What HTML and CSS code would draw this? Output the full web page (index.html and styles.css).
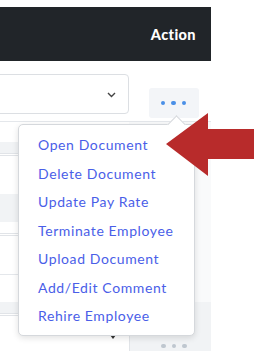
FILE: index.html
```html
<!DOCTYPE html>
<html lang="en">
<head>
  <meta charset="UTF-8" />
  <meta name="viewport" content="width=device-width, initial-scale=1.0"/>
  <title>Employees | Actions</title>
  <link rel="stylesheet" href="styles.css">
</head>
<body>

  <div class="table">
    <div class="thead">
      <span class="th">Action</span>
    </div>

    <div class="row-first">
      <div class="cell-main">
        <div class="select">
          <svg class="chevron" width="9" height="6" viewBox="0 0 9 6"><path d="M1 1l3.5 3.5L8 1" fill="none" stroke="#444" stroke-width="1.4"/></svg>
        </div>
      </div>
      <div class="cell-action">
        <button class="dots"><i></i><i></i><i></i></button>
      </div>
    </div>

    <div class="rows">
      <div class="col-main">
        <div class="gap" style="height:20px"></div>
        <div class="band" style="height:11px"></div>
        <div class="dline"></div>
        <div class="gap" style="height:38px"></div>
        <div class="band" style="height:28px"></div>
        <div class="gap" style="height:11px"></div>
        <div class="dline"></div>
        <div class="gap" style="height:38px"></div>
        <div class="line"></div>
        <div class="gap" style="height:27px"></div>
        <div class="band" style="height:11px"></div>
        <div class="dline"></div>
        <div class="last">
          <svg width="6" height="4" viewBox="0 0 6 4"><path d="M0 0h6L3 4z" fill="#333"/></svg>
        </div>
      </div>
      <div class="col-action">
        <div class="act-top"></div>
        <div class="act-bottom">
          <span class="dots dots-muted"><i></i><i></i><i></i></span>
        </div>
      </div>
    </div>

    <!-- dropdown shown over the table -->
    <div class="menu">
      <span class="caret"></span>
      <a href="#" class="menu-item">Open Document</a>
      <a href="#" class="menu-item">Delete Document</a>
      <a href="#" class="menu-item">Update Pay Rate</a>
      <a href="#" class="menu-item">Terminate Employee</a>
      <a href="#" class="menu-item">Upload Document</a>
      <a href="#" class="menu-item">Add/Edit Comment</a>
      <a href="#" class="menu-item">Rehire Employee</a>
    </div>

    <svg class="pointer" width="90" height="64" viewBox="0 0 90 64">
      <polygon points="0,31 42,0 42,16 88,16 88,46 42,46 42,63" fill="#b82b2b"/>
    </svg>
  </div>

</body>
</html>
```

FILE: styles.css
```css
html, body {
  margin: 0;
  padding: 0;
  height: 100%;
  background: #fff;
  font-family: Lato, "Open Sans", sans-serif;
  overflow: hidden;
}

.table {
  position: relative;
  width: 211px;
  margin-top: 7px;
}

.thead {
  height: 54px;
  background: #212529;
  display: flex;
  align-items: center;
  justify-content: flex-end;
  padding-right: 15px;
}

.th {
  color: #fff;
  font-weight: 900;
  font-size: 14.5px;
  letter-spacing: 0.4px;
}

.row-first {
  display: flex;
  height: 60px;
  border-bottom: 1px solid #e4e7eb;
}

.cell-main {
  width: 129px;
  padding-top: 13px;
}

.select {
  margin-left: -10px;
  width: 139px;
  height: 40px;
  border: 1px solid #dcdfe3;
  border-radius: 4px;
  display: flex;
  align-items: center;
  justify-content: flex-end;
  padding-right: 12px;
  box-sizing: border-box;
}

.chevron {
  margin-top: 1px;
}

.cell-action {
  flex: 1;
  display: flex;
  justify-content: center;
  align-items: flex-end;
  padding-bottom: 3px;
}

.dots {
  width: 50px;
  height: 30px;
  border: 0;
  padding: 0;
  background: #f3f5f8;
  border-radius: 3px;
  display: flex;
  justify-content: center;
  align-items: center;
  gap: 6px;
  margin-left: 7px;
}

.dots i {
  width: 4.5px;
  height: 4.5px;
  border-radius: 50%;
  background: #4a8fe7;
}

.dots-muted {
  background: transparent;
  height: auto;
}

.dots-muted i {
  background: #bfc7cf;
}

.rows {
  display: flex;
  height: 230px;
}

.col-main {
  width: 129px;
  display: flex;
  flex-direction: column;
}

.gap {
  background: #fff;
}

.band {
  background: #f1f3f5;
}

.line {
  height: 0;
  border-top: 1px solid #e4e7eb;
}

.dline {
  height: 1px;
  border-top: 1px solid #e1e4e8;
  border-bottom: 1px solid #e1e4e8;
}

.last {
  flex: 1;
  display: flex;
  justify-content: flex-end;
  padding-right: 13px;
  padding-top: 19px;
}

.col-action {
  flex: 1;
  display: flex;
  flex-direction: column;
}

.act-top {
  height: 180px;
  background: #f9fafb;
}

.act-bottom {
  flex: 1;
  background: #f1f3f5;
  border-left: 1px solid #e1e4e8;
  display: flex;
  justify-content: center;
  padding-top: 38px;
}

.menu {
  position: absolute;
  left: 18px;
  top: 117px;
  width: 177px;
  height: 212px;
  box-sizing: border-box;
  background: #fff;
  border: 1px solid #d5d8dc;
  border-radius: 5px;
  box-shadow: 0 2px 6px rgba(0, 0, 0, 0.12);
  padding: 6px 0;
  display: flex;
  flex-direction: column;
}

.caret {
  position: absolute;
  left: 151px;
  top: -7px;
  width: 12px;
  height: 12px;
  background: #fff;
  border-top: 1px solid #d5d8dc;
  border-left: 1px solid #d5d8dc;
  transform: rotate(45deg);
}

.menu-item {
  display: block;
  padding-left: 19px;
  line-height: 28.5px;
  font-size: 14px;
  color: #4a5ee8;
  text-decoration: none;
  letter-spacing: 0.6px;
  white-space: nowrap;
}

.pointer {
  position: absolute;
  left: 166px;
  top: 106px;
}
```
